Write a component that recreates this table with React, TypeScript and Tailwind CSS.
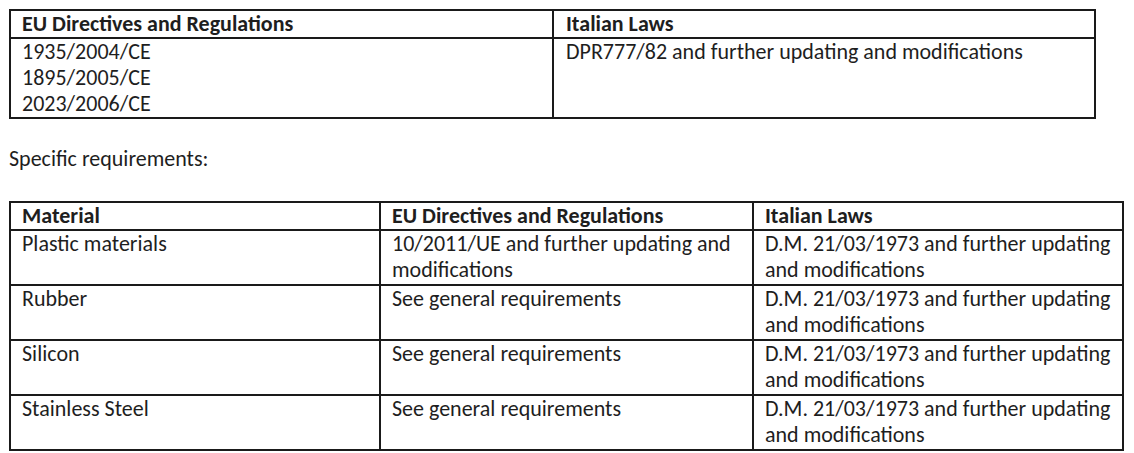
import React from 'react'

const font = { fontFamily: 'Carlito, Calibri, Lato, "Liberation Sans", sans-serif' }

const specific = [
  {
    material: 'Plastic materials',
    eu: '10/2011/UE and further updating and modifications',
    it: 'D.M. 21/03/1973 and further updating and modifications',
  },
  { material: 'Rubber', eu: 'See general requirements', it: 'D.M. 21/03/1973 and further updating and modifications' },
  { material: 'Silicon', eu: 'See general requirements', it: 'D.M. 21/03/1973 and further updating and modifications' },
  { material: 'Stainless Steel', eu: 'See general requirements', it: 'D.M. 21/03/1973 and further updating and modifications' },
]

const App = () => {
  return (
    <div className="bg-white w-[1134px] h-[453px] pt-[9px] pl-[9px] text-[22px] leading-[26px] text-[#1e1e1e]" style={font}>
      {/* general requirements */}
      <div className="w-[1087px] border-2 border-[#1a1a1a]">
        <div className="grid grid-cols-[543px_1fr] border-b-2 border-[#1a1a1a] font-bold">
          <div className="border-r-2 border-[#1a1a1a] px-[11px]">EU Directives and Regulations</div>
          <div className="px-[12px]">Italian Laws</div>
        </div>
        <div className="grid grid-cols-[543px_1fr]">
          <div className="border-r-2 border-[#1a1a1a] px-[11px]">
            <div>1935/2004/CE</div>
            <div>1895/2005/CE</div>
            <div>2023/2006/CE</div>
          </div>
          <div className="px-[12px]">DPR777/82 and further updating and modifications</div>
        </div>
      </div>

      <p className="mt-[27px] mb-[29px]">Specific requirements:</p>

      <div className="w-[1115px] border-2 border-[#1a1a1a]">
        <div className="grid grid-cols-[370px_373px_1fr] border-b-2 border-[#1a1a1a] font-bold">
          <div className="border-r-2 border-[#1a1a1a] px-[11px]">Material</div>
          <div className="border-r-2 border-[#1a1a1a] px-[11px]">EU Directives and Regulations</div>
          <div className="px-[11px]">Italian Laws</div>
        </div>
        {specific.map((row, i) => (
          <div
            key={i}
            className={
              'grid grid-cols-[370px_373px_1fr] border-[#1a1a1a] ' + (i < specific.length - 1 ? 'border-b-2' : '')
            }
          >
            <div className="border-r-2 border-[#1a1a1a] px-[11px] h-[53px]">{row.material}</div>
            <div className="border-r-2 border-[#1a1a1a] px-[11px]">{row.eu}</div>
            <div className="px-[11px]">{row.it}</div>
          </div>
        ))}
      </div>
    </div>
  )
}

export default App
